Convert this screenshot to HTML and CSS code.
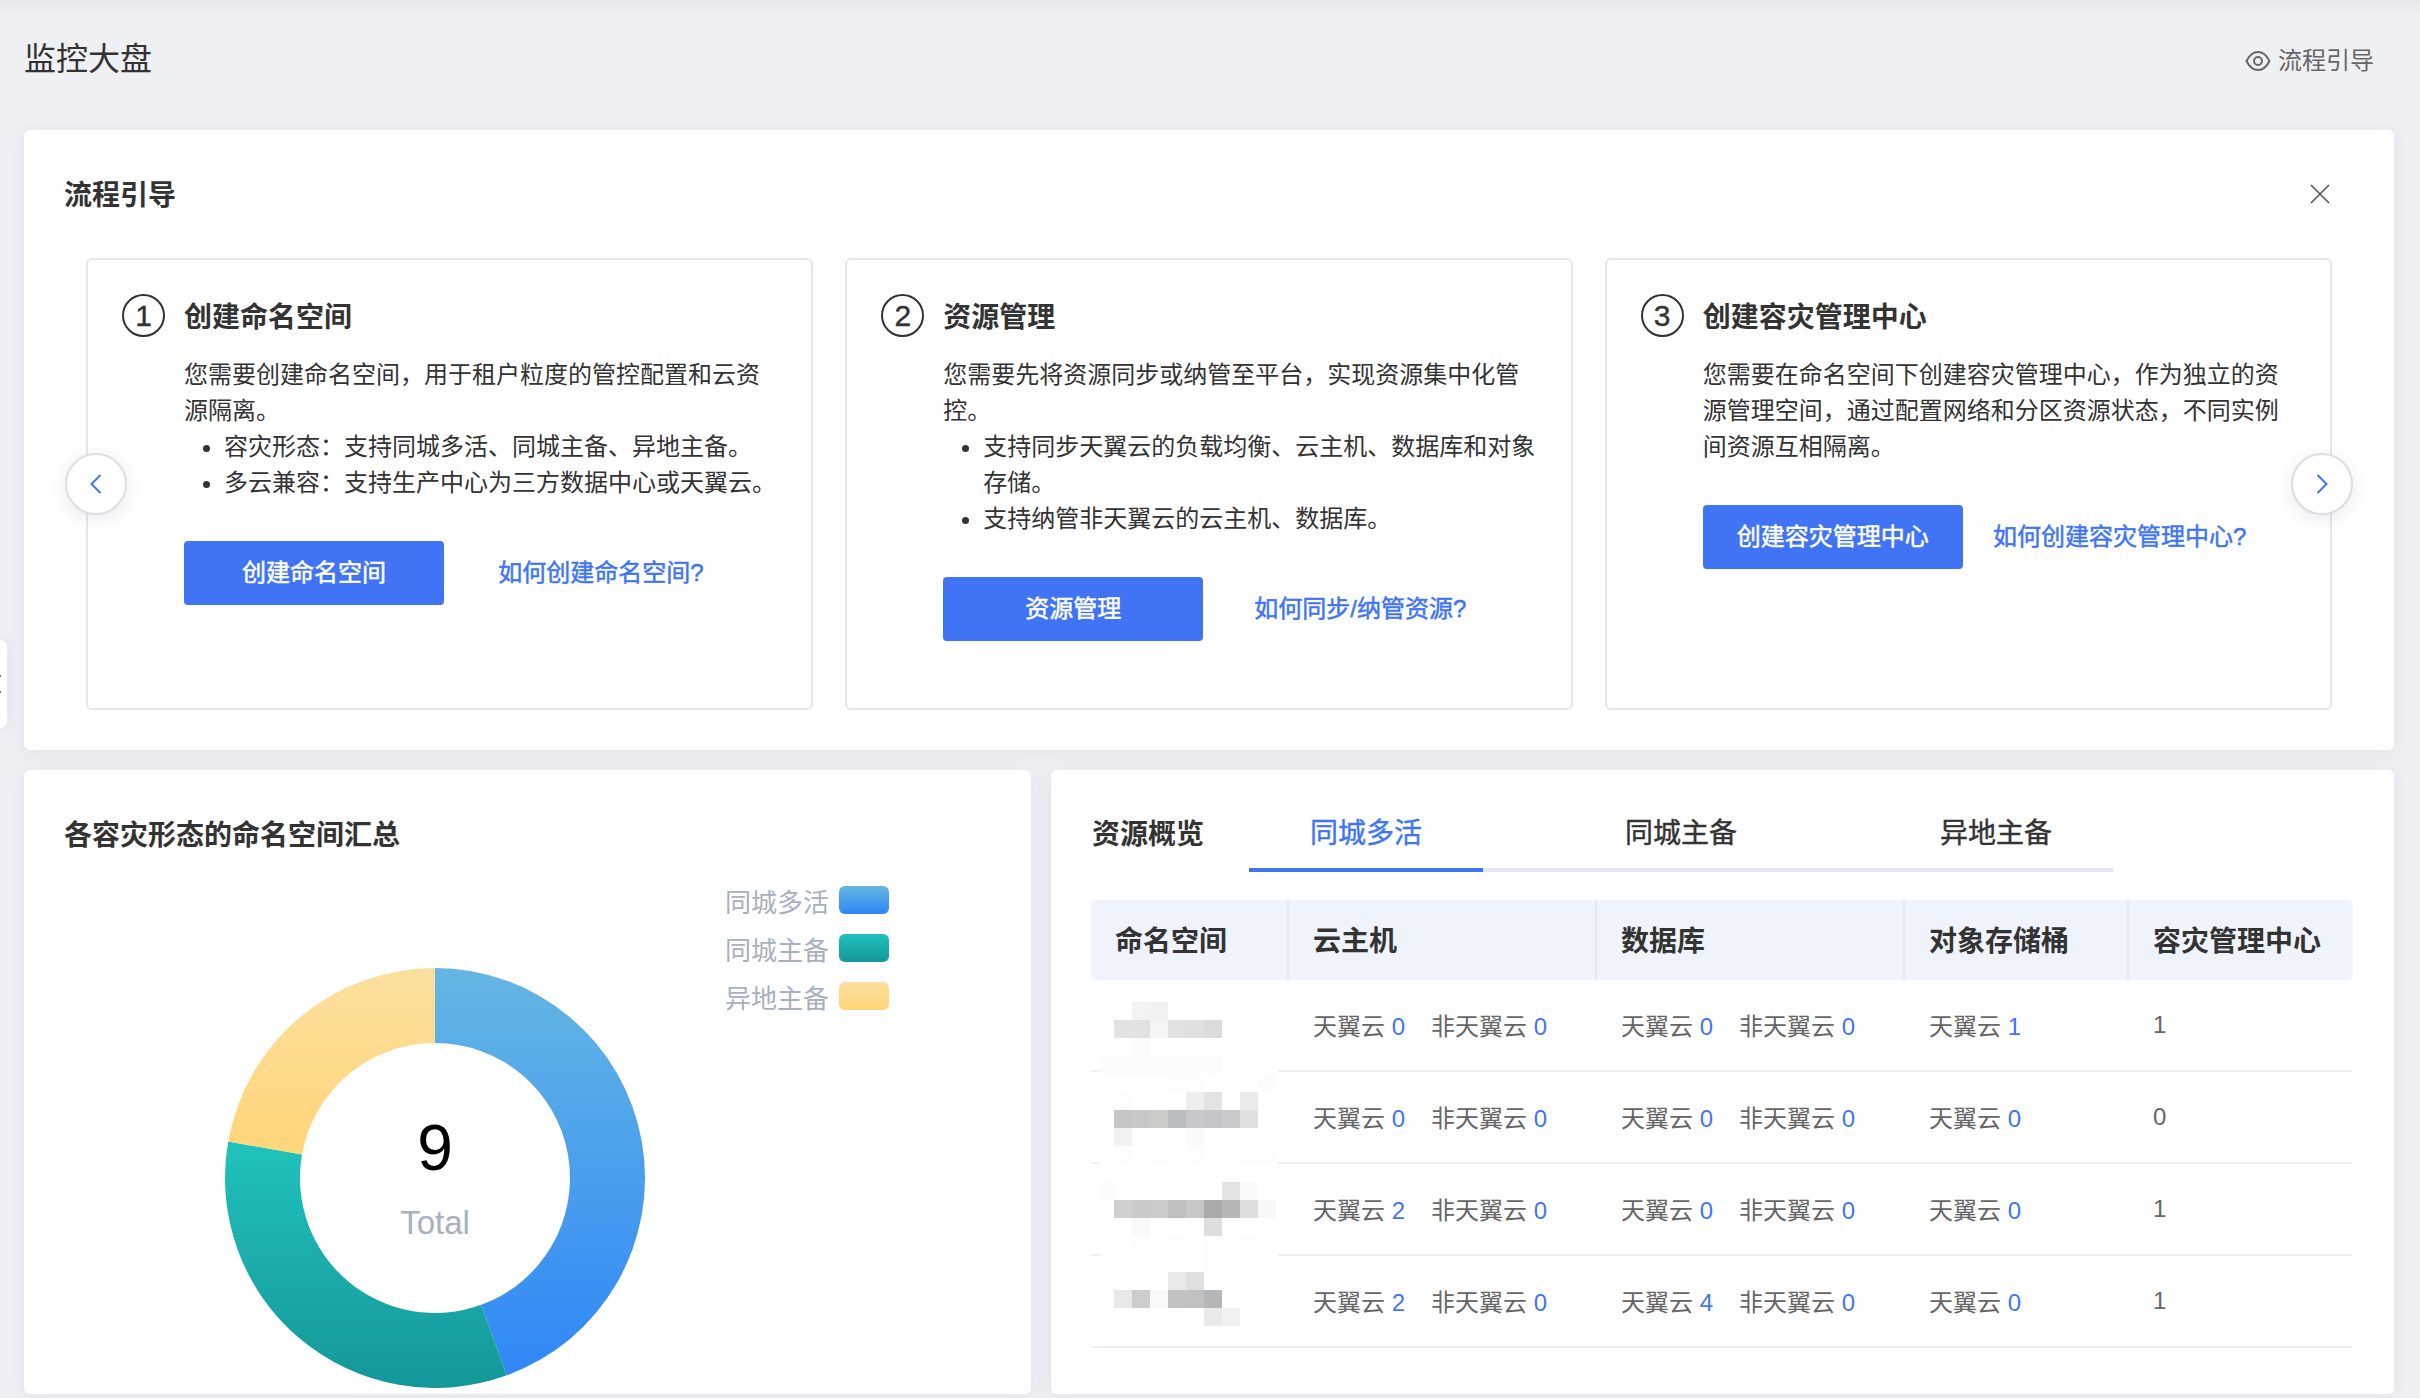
FILE: index.html
```html
<!DOCTYPE html>
<html lang="zh-CN">
<head>
    <meta charset="UTF-8">
    <title>监控大盘</title>
    <link rel="stylesheet" href="styles.css">
</head>
<body>
    <div class="side-handle"><i></i><i></i></div>

    <header class="page-head">
        <h1>监控大盘</h1>
        <a class="guide-toggle">
            <svg width="26" height="22" viewBox="0 0 26 22" fill="none" stroke="#666" stroke-width="2">
                <path d="M1.5 11C4.5 5 8.5 2 13 2s8.5 3 11.5 9C21.5 17 17.5 20 13 20S4.5 17 1.5 11Z"/>
                <circle cx="13" cy="11" r="4"/>
            </svg>
            <span>流程引导</span>
        </a>
    </header>

    <section class="card guide">
        <div class="guide-head">
            <h2>流程引导</h2>
            <svg class="close" width="20" height="20" viewBox="0 0 20 20" stroke="#555" stroke-width="1.6">
                <path d="M1 1l18 18M19 1L1 19"/>
            </svg>
        </div>

        <div class="steps">
            <div class="step">
                <div class="step-head"><span class="step-no">1</span><h3>创建命名空间</h3></div>
                <div class="step-body">
                    <p>您需要创建命名空间，用于租户粒度的管控配置和云资源隔离。</p>
                    <ul>
                        <li>容灾形态：支持同城多活、同城主备、异地主备。</li>
                        <li>多云兼容：支持生产中心为三方数据中心或天翼云。</li>
                    </ul>
                    <div class="actions"><button>创建命名空间</button><a>如何创建命名空间?</a></div>
                </div>
            </div>
            <div class="step">
                <div class="step-head"><span class="step-no">2</span><h3>资源管理</h3></div>
                <div class="step-body">
                    <p>您需要先将资源同步或纳管至平台，实现资源集中化管控。</p>
                    <ul>
                        <li>支持同步天翼云的负载均衡、云主机、数据库和对象存储。</li>
                        <li>支持纳管非天翼云的云主机、数据库。</li>
                    </ul>
                    <div class="actions"><button>资源管理</button><a>如何同步/纳管资源?</a></div>
                </div>
            </div>
            <div class="step">
                <div class="step-head"><span class="step-no">3</span><h3>创建容灾管理中心</h3></div>
                <div class="step-body">
                    <p>您需要在命名空间下创建容灾管理中心，作为独立的资源管理空间，通过配置网络和分区资源状态，不同实例间资源互相隔离。</p>
                    <div class="actions"><button>创建容灾管理中心</button><a>如何创建容灾管理中心?</a></div>
                </div>
            </div>
        </div>

        <div class="nav nav-prev">
            <svg width="12" height="20" viewBox="0 0 12 20" fill="none" stroke="#3f75f5" stroke-width="2"><path d="M10.5 1L1.5 10l9 9"/></svg>
        </div>
        <div class="nav nav-next">
            <svg width="12" height="20" viewBox="0 0 12 20" fill="none" stroke="#3f75f5" stroke-width="2"><path d="M1.5 1l9 9-9 9"/></svg>
        </div>
    </section>

    <div class="bottom">
        <section class="card summary">
            <h2>各容灾形态的命名空间汇总</h2>
            <div class="chart">
                <svg class="donut" width="420" height="420" viewBox="0 0 420 420">
                    <defs>
                        <linearGradient id="g-blue" x1="0" y1="0" x2="0" y2="1"><stop offset="0" stop-color="#65b6e3"/><stop offset="1" stop-color="#2f87f6"/></linearGradient>
                        <linearGradient id="g-green" x1="0" y1="0" x2="0" y2="1"><stop offset="0" stop-color="#20c2bc"/><stop offset="1" stop-color="#15979a"/></linearGradient>
                        <linearGradient id="g-yellow" x1="0" y1="0" x2="0" y2="1"><stop offset="0" stop-color="#fcdf9f"/><stop offset="1" stop-color="#ffd578"/></linearGradient>
                    </defs>
                    <path fill="url(#g-blue)" d="M210 0A210 210 0 0 1 281.82 407.34L256.17 336.86A135 135 0 0 0 210 75Z"/>
                    <path fill="url(#g-green)" d="M281.82 407.34A210 210 0 0 1 3.19 173.53L77.05 186.56A135 135 0 0 0 256.17 336.86Z"/>
                    <path fill="url(#g-yellow)" d="M3.19 173.53A210 210 0 0 1 210 0L210 75A135 135 0 0 0 77.05 186.56Z"/>
                    <text class="donut-num" x="210" y="202" text-anchor="middle">9</text>
                    <text class="donut-label" x="210" y="266" text-anchor="middle">Total</text>
                </svg>
                <ul class="legend">
                    <li>同城多活<i class="swatch blue"></i></li>
                    <li>同城主备<i class="swatch green"></i></li>
                    <li>异地主备<i class="swatch yellow"></i></li>
                </ul>
            </div>
        </section>

        <section class="card overview">
            <div class="overview-head">
                <h2>资源概览</h2>
                <div class="tabs">
                    <a class="tab active">同城多活</a>
                    <a class="tab">同城主备</a>
                    <a class="tab">异地主备</a>
                </div>
            </div>

            <div class="table-wrap">
                <table>
                    <thead>
                        <tr><th class="c-name">命名空间</th><th class="c-wide">云主机</th><th class="c-wide">数据库</th><th class="c-mid">对象存储桶</th><th>容灾管理中心</th></tr>
                    </thead>
                    <tbody>
                        <tr>
                            <td></td>
                            <td><span class="stat">天翼云 <b>0</b></span><span class="stat">非天翼云 <b>0</b></span></td>
                            <td><span class="stat">天翼云 <b>0</b></span><span class="stat">非天翼云 <b>0</b></span></td>
                            <td><span class="stat">天翼云 <b>1</b></span></td>
                            <td>1</td>
                        </tr>
                        <tr>
                            <td></td>
                            <td><span class="stat">天翼云 <b>0</b></span><span class="stat">非天翼云 <b>0</b></span></td>
                            <td><span class="stat">天翼云 <b>0</b></span><span class="stat">非天翼云 <b>0</b></span></td>
                            <td><span class="stat">天翼云 <b>0</b></span></td>
                            <td>0</td>
                        </tr>
                        <tr>
                            <td></td>
                            <td><span class="stat">天翼云 <b>2</b></span><span class="stat">非天翼云 <b>0</b></span></td>
                            <td><span class="stat">天翼云 <b>0</b></span><span class="stat">非天翼云 <b>0</b></span></td>
                            <td><span class="stat">天翼云 <b>0</b></span></td>
                            <td>1</td>
                        </tr>
                        <tr>
                            <td></td>
                            <td><span class="stat">天翼云 <b>2</b></span><span class="stat">非天翼云 <b>0</b></span></td>
                            <td><span class="stat">天翼云 <b>4</b></span><span class="stat">非天翼云 <b>0</b></span></td>
                            <td><span class="stat">天翼云 <b>0</b></span></td>
                            <td>1</td>
                        </tr>
                    </tbody>
                </table>

                <!-- names are pixelated in the source -->
                <svg class="mosaic" width="178" height="362" viewBox="0 0 178 362" shape-rendering="crispEdges">
                    <rect width="178" height="362" fill="#fff"/>
                    <g>
                        <rect x="32" y="18" width="18" height="18" fill="#f3f3f3"/><rect x="50" y="18" width="18" height="18" fill="#f1f1f1"/>
                        <rect x="14" y="36" width="18" height="18" fill="#e1e2e1"/><rect x="32" y="36" width="18" height="18" fill="#e2e2e2"/><rect x="50" y="36" width="18" height="18" fill="#f5f5f5"/><rect x="68" y="36" width="18" height="18" fill="#e2e2e2"/><rect x="86" y="36" width="18" height="18" fill="#e0e0e0"/><rect x="104" y="36" width="18" height="18" fill="#dbdbdb"/>
                        <rect x="32" y="54" width="18" height="18" fill="#fbfbfb"/><rect x="122" y="54" width="18" height="18" fill="#fdfdfd"/>
                        <rect x="0" y="72" width="122" height="18" fill="#fcfcfc"/>
                    </g>
                    <g>
                        <rect x="68" y="90" width="36" height="18" fill="#fdfdfd"/><rect x="158" y="90" width="18" height="18" fill="#fcfcfc"/>
                        <rect x="14" y="108" width="18" height="18" fill="#fdfdfd"/><rect x="86" y="108" width="18" height="18" fill="#eee"/><rect x="104" y="108" width="18" height="18" fill="#e3e3e3"/><rect x="140" y="108" width="18" height="18" fill="#ebebeb"/>
                        <rect x="14" y="126" width="18" height="18" fill="#c5c6c7"/><rect x="32" y="126" width="18" height="18" fill="#c8c8c9"/><rect x="50" y="126" width="18" height="18" fill="#cbcbca"/><rect x="68" y="126" width="18" height="18" fill="#bbbcbe"/><rect x="86" y="126" width="18" height="18" fill="#c8c8ca"/><rect x="104" y="126" width="18" height="18" fill="#c6c6c8"/><rect x="122" y="126" width="18" height="18" fill="#c8c9cb"/><rect x="140" y="126" width="18" height="18" fill="#e0e0e0"/>
                        <rect x="14" y="144" width="18" height="18" fill="#f2f2f2"/><rect x="86" y="144" width="18" height="18" fill="#fafafa"/>
                        <rect x="14" y="162" width="18" height="18" fill="#fdfdfd"/><rect x="50" y="162" width="18" height="18" fill="#fdfdfd"/><rect x="86" y="162" width="18" height="18" fill="#fdfdfd"/><rect x="140" y="162" width="36" height="18" fill="#fdfdfd"/>
                    </g>
                    <g>
                        <rect x="0" y="198" width="14" height="18" fill="#fcfcfc"/><rect x="122" y="198" width="18" height="18" fill="#e4e4e4"/><rect x="140" y="198" width="18" height="18" fill="#f9f9f9"/>
                        <rect x="14" y="216" width="18" height="18" fill="#cfd0d1"/><rect x="32" y="216" width="18" height="18" fill="#c9cacc"/><rect x="50" y="216" width="18" height="18" fill="#cbcbcd"/><rect x="68" y="216" width="18" height="18" fill="#bfbfc1"/><rect x="86" y="216" width="18" height="18" fill="#c7c7c9"/><rect x="104" y="216" width="18" height="18" fill="#a9aaac"/><rect x="122" y="216" width="18" height="18" fill="#b6b6b8"/><rect x="140" y="216" width="18" height="18" fill="#dedede"/><rect x="158" y="216" width="18" height="18" fill="#f8f8f8"/>
                        <rect x="32" y="234" width="18" height="18" fill="#f9f9f9"/><rect x="104" y="234" width="18" height="18" fill="#dedede"/>
                        <rect x="32" y="252" width="18" height="18" fill="#fdfdfd"/><rect x="68" y="252" width="18" height="18" fill="#fdfdfd"/><rect x="104" y="252" width="18" height="18" fill="#fdfdfd"/><rect x="140" y="252" width="18" height="18" fill="#fdfdfd"/>
                    </g>
                    <g>
                        <rect x="68" y="270" width="18" height="18" fill="#fdfdfd"/><rect x="104" y="270" width="36" height="18" fill="#fdfdfd"/>
                        <rect x="68" y="288" width="18" height="18" fill="#e8e9e8"/><rect x="86" y="288" width="18" height="18" fill="#e0e0e0"/>
                        <rect x="14" y="306" width="18" height="18" fill="#e8e8e8"/><rect x="32" y="306" width="18" height="18" fill="#cdcdcd"/><rect x="50" y="306" width="18" height="18" fill="#f9f9f9"/><rect x="68" y="306" width="18" height="18" fill="#c2c2c2"/><rect x="86" y="306" width="18" height="18" fill="#c0c1c2"/><rect x="104" y="306" width="18" height="18" fill="#b5b6b7"/>
                        <rect x="104" y="324" width="18" height="18" fill="#e9e9e9"/><rect x="122" y="324" width="18" height="18" fill="#f2f2f2"/>
                        <rect x="140" y="342" width="18" height="12" fill="#fdfdfd"/>
                    </g>
                </svg>
            </div>
        </section>
    </div>
</body>
</html>
```

FILE: styles.css
```css
* {
    box-sizing: border-box;
    margin: 0;
    padding: 0;
}

html, body {
    height: 1398px;
    overflow: hidden;
}

body {
    font-family: "Liberation Sans", "Noto Sans CJK SC", sans-serif;
    color: #333;
    background: linear-gradient(#e8e9ed, #eff0f4 16px);
    padding: 0 26px 0 24px;
    position: relative;
}

h2, h3 {
    font-weight: 600;
}

ul {
    list-style: none;
}

.card {
    background-color: #fff;
    border-radius: 6px;
    box-shadow: 0 2px 18px rgba(40, 50, 80, 0.07);
}

/* page head */
.page-head {
    height: 130px;
    display: flex;
    justify-content: space-between;
    align-items: center;
    padding-bottom: 14px;
}

.page-head h1 {
    font-size: 32px;
    font-weight: 400;
    line-height: 44px;
    margin-top: 1px;
}

.guide-toggle {
    display: flex;
    align-items: center;
    gap: 7px;
    font-size: 24px;
    line-height: 32px;
    color: #666;
    margin-right: 20px;
    margin-top: 6px;
}

.side-handle {
    position: absolute;
    left: 0;
    top: 640px;
    width: 7px;
    height: 88px;
    background-color: #fff;
    border-radius: 0 14px 14px 0;
    box-shadow: 0 0 12px rgba(40, 50, 80, 0.1);
}

.side-handle i {
    position: absolute;
    left: 0;
    top: 35px;
    width: 1px;
    height: 2px;
    background-color: #777;
}

.side-handle i + i {
    top: 51px;
}

/* guide */
.guide {
    height: 620px;
    padding: 44px 62px 0 40px;
    position: relative;
}

.guide-head {
    display: flex;
    justify-content: space-between;
    align-items: center;
    height: 40px;
}

.guide-head h2 {
    font-size: 28px;
    line-height: 40px;
    margin-top: 4px;
}

.close {
    margin-right: 2px;
}

.steps {
    display: flex;
    gap: 32px;
    margin: 44px 0 0 22px;
}

.step {
    flex: 1;
    height: 452px;
    border: 2px solid #e4e7ee;
    border-radius: 6px;
    padding: 34px 28px 0 34px;
}

.step-head {
    display: flex;
    align-items: center;
    gap: 19px;
    height: 43px;
}

.step-no {
    width: 43px;
    height: 43px;
    border: 2px solid #333;
    border-radius: 50%;
    font-size: 30px;
    -webkit-text-stroke: 0.4px #333;
    display: flex;
    align-items: center;
    justify-content: center;
}

.step-head h3 {
    font-size: 28px;
    line-height: 40px;
    margin-top: 4px;
}

.step-body {
    margin: 20px 0 0 62px;
    font-size: 24px;
    line-height: 36px;
}

.step-body ul {
    list-style: disc;
    padding-left: 40px;
}

.actions {
    display: flex;
    align-items: center;
    margin-top: 40px;
}

.actions button {
    width: 260px;
    height: 64px;
    border: none;
    border-radius: 4px;
    background-color: #4174f5;
    color: #fff;
    font: inherit;
    -webkit-text-stroke: 0.5px #fff;
}

.actions a {
    width: 314px;
    text-align: center;
    color: #3f75f5;
    -webkit-text-stroke: 0.5px #3f75f5;
}

.nav {
    position: absolute;
    top: 323px;
    width: 62px;
    height: 62px;
    border: 2px solid #dcdee3;
    border-radius: 50%;
    background-color: #fff;
    box-shadow: 0 4px 18px rgba(40, 50, 80, 0.1);
    display: flex;
    align-items: center;
    justify-content: center;
}

.nav-prev {
    left: 41px;
}

.nav-next {
    right: 41px;
}

/* bottom row */
.bottom {
    display: grid;
    grid-template-columns: 1007px 1343px;
    gap: 20px;
    margin-top: 20px;
}

.summary, .overview {
    height: 624px;
}

.summary {
    padding: 46px 0 0 40px;
}

.summary h2 {
    font-size: 28px;
    line-height: 40px;
}

.chart {
    display: flex;
    align-items: flex-start;
    margin-top: 30px;
}

.donut {
    margin: 82px 0 0 161px;
}

.donut-num {
    font-size: 64px;
    fill: #000;
}

.donut-label {
    font-size: 33px;
    fill: #a7b0c0;
}

.legend {
    margin-left: 80px;
}

.legend li {
    display: flex;
    align-items: center;
    gap: 10px;
    height: 28px;
    margin-bottom: 20px;
    font-size: 26px;
    color: #a7b0c0;
}

.swatch {
    width: 50px;
    height: 28px;
    border-radius: 6px;
}

.swatch.blue {
    background: linear-gradient(#65b6e3, #2f87f6);
}

.swatch.green {
    background: linear-gradient(#20c2bc, #15979a);
}

.swatch.yellow {
    background: linear-gradient(#fcdf9f, #ffd578);
}

.overview {
    padding: 44px 41px 0 40px;
}

.overview-head {
    display: flex;
    align-items: flex-start;
    padding-left: 1px;
}

.overview-head h2 {
    font-size: 28px;
    line-height: 40px;
    margin: 1px 45px 0 0;
}

.tabs {
    display: flex;
    gap: 81px;
    border-bottom: 4px solid #e6e8ef;
}

.tab {
    font-size: 28px;
    line-height: 40px;
    padding: 0 61px 14px;
    -webkit-text-stroke: 0.4px #333;
}

.tab.active {
    color: #3f75f5;
    -webkit-text-stroke: 0.4px #3f75f5;
    border-bottom: 4px solid #3f75f5;
    margin-bottom: -4px;
}

.table-wrap {
    position: relative;
    margin-top: 28px;
}

table {
    width: 1262px;
    table-layout: fixed;
    border-collapse: separate;
    border-spacing: 0;
}

th {
    height: 80px;
    padding: 0 0 3px 24px;
    text-align: left;
    font-size: 28px;
    font-weight: 600;
    background-color: #eff3fb;
    border-left: 2px solid #e4e8f0;
}

th:first-child {
    border-left: none;
    border-radius: 6px 0 0 6px;
}

th:last-child {
    border-radius: 0 6px 6px 0;
}

.c-name {
    width: 196px;
}

.c-wide {
    width: 308px;
}

.c-mid {
    width: 224px;
}

td {
    height: 92px;
    padding-left: 26px;
    font-size: 24px;
    color: #666;
    border-bottom: 2px solid #eef0f5;
}

.stat {
    margin-right: 26px;
    vertical-align: 2px;
}

.stat b {
    font-weight: 400;
    color: #3f75f5;
}

.mosaic {
    position: absolute;
    left: 9px;
    top: 84px;
}
```
